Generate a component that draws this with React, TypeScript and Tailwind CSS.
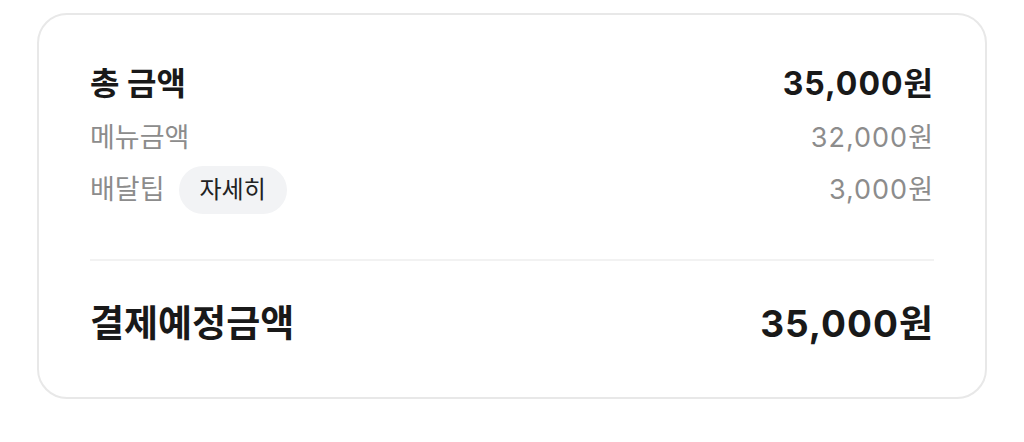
const font = "font-['Inter','Noto_Sans_CJK_KR',sans-serif]";

const rows = [
  { label: "메뉴금액", value: "32,000원" },
  { label: "배달팁", value: "3,000원", detail: true },
];

export default function App() {
  return (
    <div className={`min-h-[442px] w-full bg-white pt-[13px] ${font}`}>
      <div className="mx-[37px] rounded-[30px] border-2 border-[#e8e8e8] bg-white px-[51px] pt-[49px] pb-[49px]">
        {/* 총 금액 */}
        <div className="flex h-[40px] items-center justify-between text-[32px] font-bold text-[#191919]">
          <span>총 금액</span>
          <span className="tracking-[1px]">35,000원</span>
        </div>

        {rows.map((row) =>
          row.detail ? (
            <div
              key={row.label}
              className="mt-[8px] flex h-[48px] items-center justify-between text-[27px] text-[#8c8c8c]"
            >
              <div className="flex items-center gap-[14px]">
                <span>{row.label}</span>
                <button className="flex h-[48px] items-center rounded-full bg-[#f2f3f5] px-[21px] text-[24px] text-[#222]">
                  자세히
                </button>
              </div>
              <span className="tracking-[1px]">{row.value}</span>
            </div>
          ) : (
            <div
              key={row.label}
              className="mt-[14px] flex h-[40px] items-center justify-between text-[27px] text-[#8c8c8c]"
            >
              <span>{row.label}</span>
              <span className="tracking-[1px]">{row.value}</span>
            </div>
          )
        )}

        <div className="mt-[45px] h-[2px] bg-[#f2f2f2]" />

        {/* 결제예정금액 */}
        <div className="mt-[39px] flex h-[48px] items-center justify-between text-[37px] font-bold text-[#191919]">
          <span>결제예정금액</span>
          <span className="tracking-[1px]">35,000원</span>
        </div>
      </div>
    </div>
  );
}
